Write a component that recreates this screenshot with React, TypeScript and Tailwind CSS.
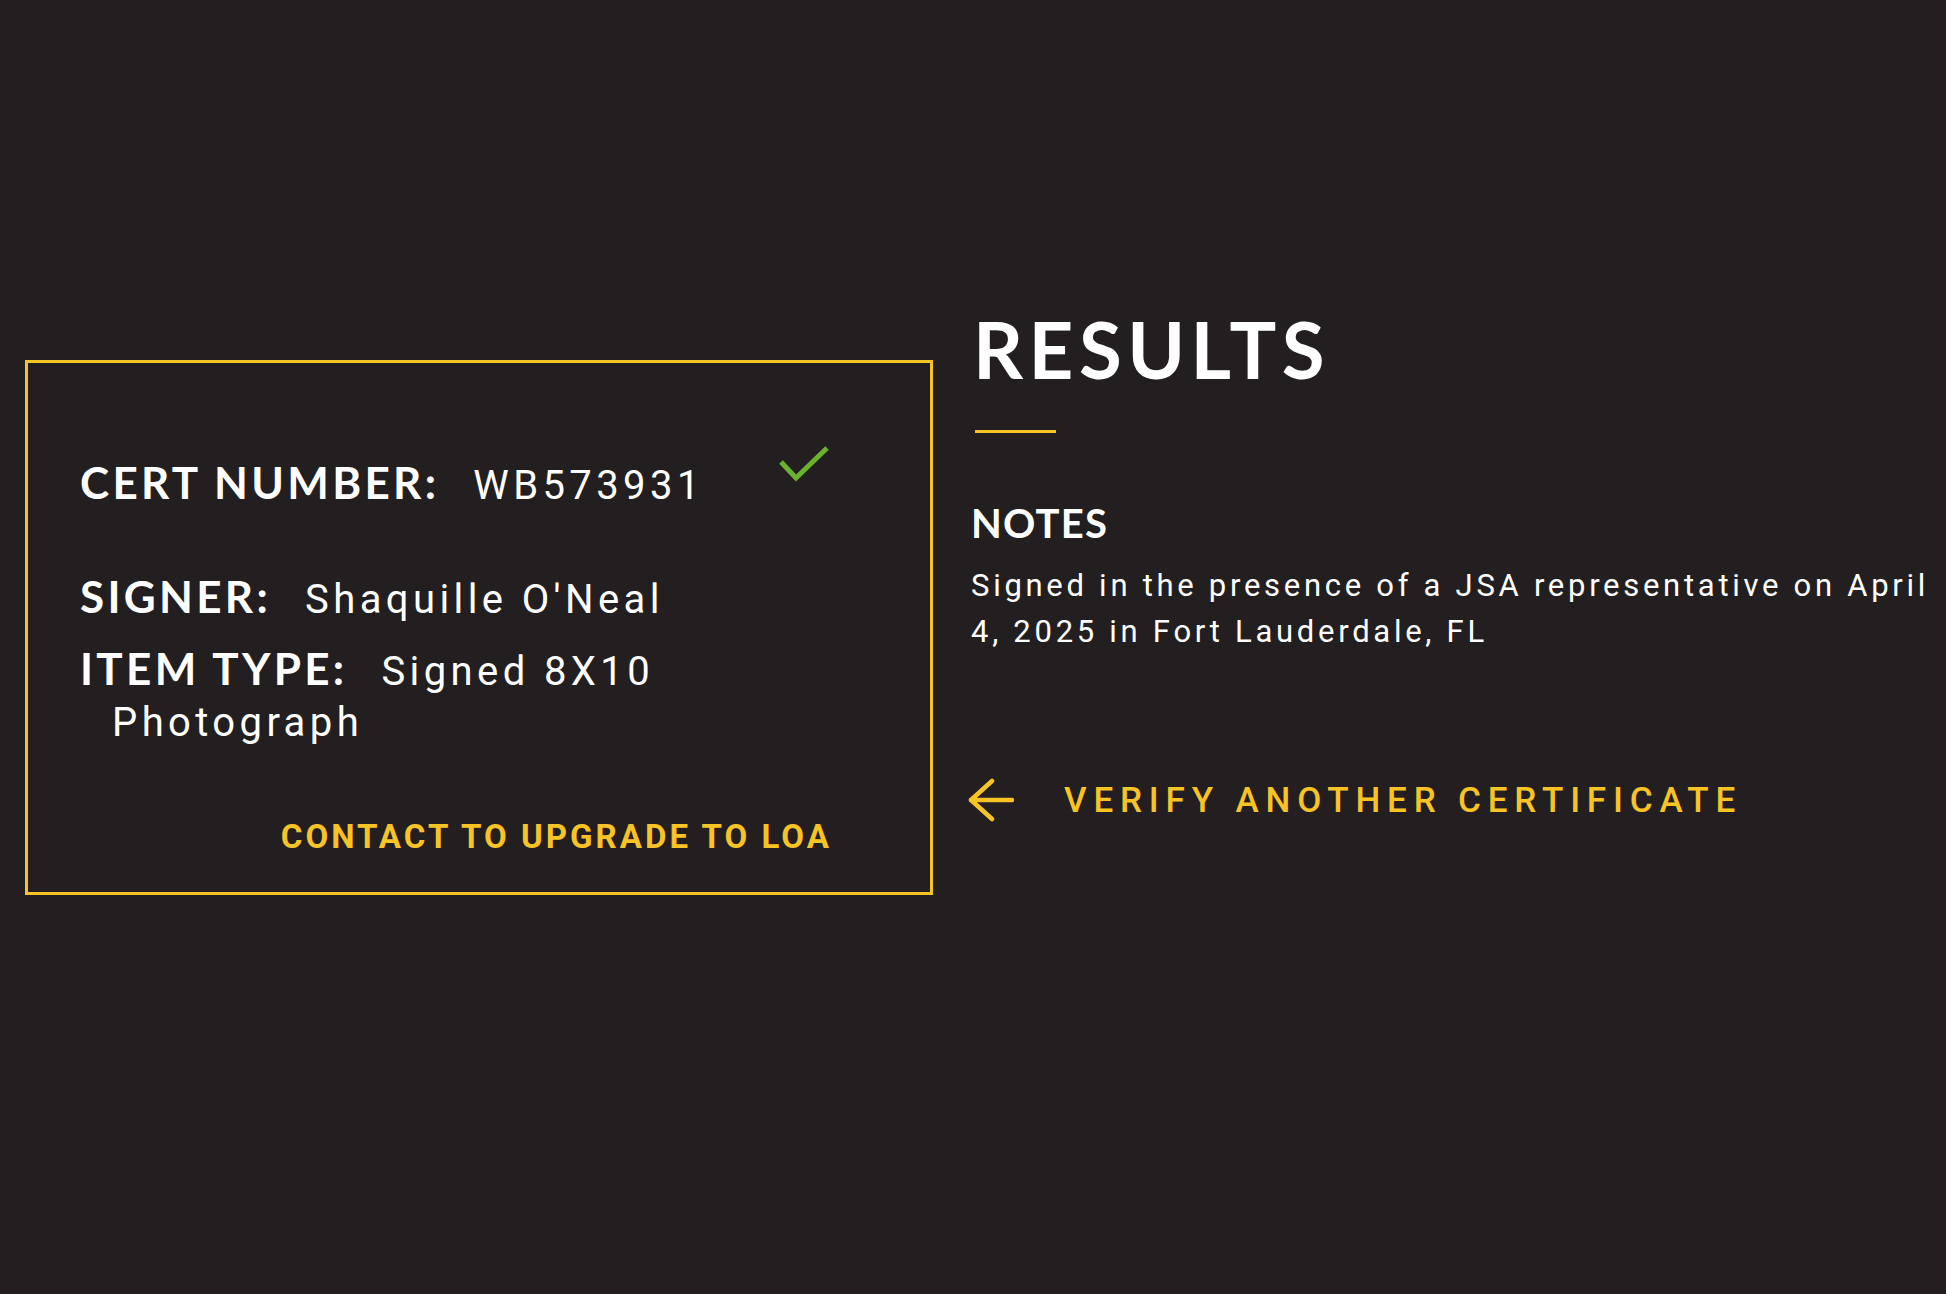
const ArrowBack = () => (
  <svg width="46" height="44" viewBox="0 0 46 44" fill="none" stroke="#f7c325" strokeWidth="4.5" strokeLinecap="round" strokeLinejoin="round">
    <path d="M24 3 L3 22 L24 41" />
    <path d="M3 22 H44" />
  </svg>
)

const Check = () => (
  <svg width="52" height="38" viewBox="0 0 52 38" fill="none" stroke="#6ab22e" strokeWidth="5" strokeLinejoin="miter">
    <path d="M3 17 L18 33 L49 3" />
  </svg>
)

const labelStyle = "font-['Lato',sans-serif] font-bold text-[44px] tracking-[0.075em]"
const valueStyle = "font-['Roboto',sans-serif] text-[40px] tracking-[0.11em] ml-[34px]"

export default function App() {
  return (
    <div className="min-h-screen w-full bg-[#231f20] text-white">
      <div className="flex items-start gap-[38px] pl-[25px] pt-[310px]">
        <div className="mt-[50px] flex h-[535px] w-[908px] shrink-0 flex-col border-[3px] border-[#f7c325] pl-[52px] pr-[98px] pt-[94px]">
          <div className="flex items-start justify-between">
            <p className="leading-[50px]">
              <span className={labelStyle}>CERT NUMBER:</span>
              <span className={valueStyle}>WB573931</span>
            </p>
            <div className="-mt-[12px] mr-[2px]">
              <Check />
            </div>
          </div>
          <p className="mt-[53px] leading-[50px]">
            <span className={labelStyle}>SIGNER:</span>
            <span className={valueStyle}>Shaquille O'Neal</span>
          </p>
          <p className="mt-[15px] pl-[32px] -indent-[32px] leading-[43px]">
            <span className={labelStyle}>ITEM TYPE:</span>
            <span className={valueStyle}>Signed 8X10</span>
            <br />
            <span className="font-['Roboto',sans-serif] text-[40px] tracking-[0.11em]">Photograph</span>
          </p>
          <div className="mt-[65px] flex justify-end">
            <a className="font-['Roboto',sans-serif] text-[33px] font-bold leading-[40px] tracking-[0.092em] text-[#f7c325]">
              CONTACT TO UPGRADE TO LOA
            </a>
          </div>
        </div>

        <div className="flex flex-col">
          <h1 className="ml-[2px] font-['Lato',sans-serif] text-[78px] font-bold leading-none tracking-[0.07em]">RESULTS</h1>
          <div className="ml-[4px] mt-[42px] h-[3px] w-[81px] bg-[#f7c325]" />
          <h2 className="mt-[70px] font-['Lato',sans-serif] text-[40px] font-bold leading-none tracking-[0.03em]">NOTES</h2>
          <p className="mt-[20px] max-w-[975px] font-['Roboto',sans-serif] text-[31px] leading-[46px] tracking-[0.12em]">
            Signed in the presence of a JSA representative on April 4, 2025 in Fort Lauderdale, FL
          </p>
          <a className="mt-[123px] -ml-[3px] flex items-center gap-[50px]">
            <ArrowBack />
            <span className="font-['Roboto',sans-serif] text-[35px] font-medium leading-none tracking-[0.195em] text-[#f7c325]">
              VERIFY ANOTHER CERTIFICATE
            </span>
          </a>
        </div>
      </div>
    </div>
  )
}
